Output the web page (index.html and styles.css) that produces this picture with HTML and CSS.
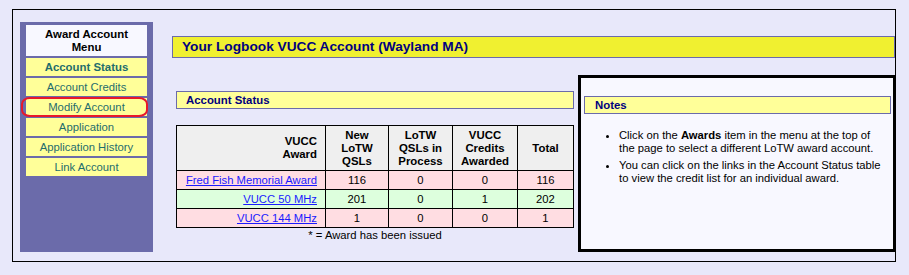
FILE: index.html
```html
<!DOCTYPE html>
<html>
<head>
<meta charset="utf-8">
<link rel="stylesheet" href="styles.css">
</head>
<body>
<div class="frame">
  <div class="sidebar">
    <div class="menu-head">Award Account<br>Menu</div>
    <div class="menu-item current">Account Status</div>
    <div class="menu-item">Account Credits</div>
    <div class="menu-item marked">Modify Account</div>
    <div class="menu-item">Application</div>
    <div class="menu-item">Application History</div>
    <div class="menu-item">Link Account</div>
  </div>
  <div class="main">
    <div class="title-bar">Your Logbook VUCC Account (Wayland MA)</div>
    <div class="content">
      <div class="left-col">
        <div class="section-head">Account Status</div>
        <table class="status">
          <tr class="head">
            <th class="award">VUCC<br>Award</th>
            <th>New<br>LoTW<br>QSLs</th>
            <th>LoTW<br>QSLs in<br>Process</th>
            <th>VUCC<br>Credits<br>Awarded</th>
            <th>Total</th>
          </tr>
          <tr class="pink">
            <td class="award"><a href="#">Fred Fish Memorial Award</a></td>
            <td>116</td><td>0</td><td>0</td><td>116</td>
          </tr>
          <tr class="green">
            <td class="award"><a href="#">VUCC 50 MHz</a></td>
            <td>201</td><td>0</td><td>1</td><td>202</td>
          </tr>
          <tr class="pink">
            <td class="award"><a href="#">VUCC 144 MHz</a></td>
            <td>1</td><td>0</td><td>0</td><td>1</td>
          </tr>
        </table>
        <div class="footnote">* = Award has been issued</div>
      </div>
      <div class="notes">
        <div class="notes-head">Notes</div>
        <ul class="notes-list">
          <li>Click on the <b>Awards</b> item in the menu at the top of the page to select a different LoTW award account.</li>
          <li>You can click on the links in the Account Status table to view the credit list for an individual award.</li>
        </ul>
      </div>
    </div>
  </div>
</div>
</body>
</html>
```
FILE: styles.css
```css
html, body {
  margin: 0;
  padding: 0;
  background: #e8e8fa;
  font-family: "Liberation Sans", Arial, sans-serif;
}

.frame {
  box-sizing: border-box;
  margin: 9px 0 0 12px;
  width: 884px;
  height: 253px;
  border: 1px solid #000;
  display: flex;
  align-items: flex-start;
}

.sidebar {
  box-sizing: border-box;
  margin: 12px 0 0 7px;
  width: 133px;
  height: 230px;
  background: #6b6baa;
  padding: 3px 6px;
  display: flex;
  flex-direction: column;
  gap: 2px;
}

.menu-head {
  box-sizing: border-box;
  height: 31px;
  background: #f8f8ff;
  color: #000;
  font-weight: bold;
  font-size: 11.4px;
  line-height: 13px;
  text-align: center;
  padding-top: 3px;
}

.menu-item {
  position: relative;
  height: 18px;
  line-height: 18px;
  background: #ffff99;
  color: #1f6d6d;
  font-size: 11.3px;
  text-align: center;
}

.menu-item.current {
  font-weight: bold;
  font-size: 11.4px;
}

.menu-item.marked::after {
  content: "";
  position: absolute;
  left: -5px;
  right: -1px;
  top: -1px;
  bottom: -1px;
  border: 2px solid #e8182a;
  border-radius: 9px / 7px;
}

.main {
  flex: 1;
  margin-left: 19px;
  padding-top: 26px;
  min-width: 0;
}

.title-bar {
  box-sizing: border-box;
  height: 22px;
  border: 1px solid #6b6baa;
  background: #f0f030;
  color: #000080;
  font-weight: bold;
  font-size: 13.7px;
  line-height: 20px;
  padding-left: 9px;
}

.content {
  display: flex;
  align-items: flex-start;
  margin-top: 17px;
  margin-left: 4px;
}

.left-col {
  width: 398px;
  padding-top: 16px;
}

.section-head {
  box-sizing: border-box;
  height: 18px;
  border: 1px solid #6b6baa;
  background: #ffff99;
  color: #000080;
  font-weight: bold;
  font-size: 11.4px;
  line-height: 16px;
  padding-left: 9px;
}

.status {
  margin-top: 16px;
  width: 398px;
  border-collapse: collapse;
  border: 1px solid #000;
  font-size: 11.25px;
  table-layout: fixed;
}

.status th, .status td {
  box-sizing: border-box;
  border: 1px solid #000;
  padding: 0 8px;
  text-align: center;
}

.status th {
  background: #efefef;
  height: 45px;
  line-height: 13px;
  font-weight: bold;
  font-size: 11.4px;
  color: #000;
  padding: 0 4px;
}

.status th.award {
  padding-right: 8px;
}

.status td {
  height: 19px;
  line-height: 14px;
  color: #000;
}

.status th:nth-child(1) { width: 149px; }
.status th:nth-child(2) { width: 63px; }
.status th:nth-child(3) { width: 64px; }
.status th:nth-child(4) { width: 65px; }

.status .award {
  text-align: right;
}

.status a {
  color: #1a1aff;
}

.status tr.pink td { background: #ffdde2; }
.status tr.green td { background: #ddffdd; }

.footnote {
  text-align: center;
  font-size: 11.25px;
  line-height: 13px;
  color: #000;
  margin-top: 1px;
}

.notes {
  box-sizing: border-box;
  margin-left: 4px;
  margin-right: -1px;
  width: 318px;
  height: 177px;
  border: 3px solid #000;
  background: #f8f8ff;
  padding: 18px 2px 0 3px;
}

.notes-head {
  box-sizing: border-box;
  height: 18px;
  border: 1px solid #6b6baa;
  background: #ffff99;
  color: #000080;
  font-weight: bold;
  font-size: 11.4px;
  line-height: 16px;
  padding-left: 10px;
}

.notes-list {
  margin: 15px 0 0 0;
  padding: 0 0 0 35px;
  width: 268px;
  font-size: 11.25px;
  line-height: 13px;
  color: #000;
}

.notes-list li {
  margin-bottom: 4px;
}
```
